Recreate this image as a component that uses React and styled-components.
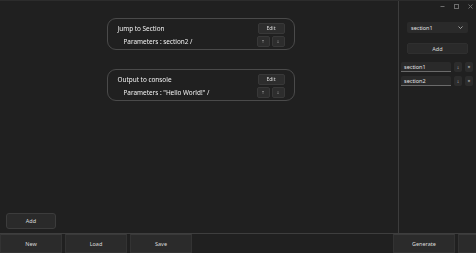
import React from "react";
import styled, { createGlobalStyle } from "styled-components";

const Global = createGlobalStyle`
  html, body {
    margin: 0;
    padding: 0;
    background: #202020;
    overflow: hidden;
  }
  body {
    font-family: "Noto Sans", "Open Sans", sans-serif;
    color: #e6e6e6;
    -webkit-font-smoothing: antialiased;
  }
`;

const Window = styled.div`
  position: relative;
  width: 476px;
  height: 253px;
  overflow: hidden;
  display: grid;
  grid-template-rows: 1fr 19px;
  grid-template-columns: 476px;
  background: #202020;
  border-top: 1px solid #2c2c2c;
  box-sizing: border-box;
`;

const Body = styled.div`
  display: grid;
  grid-template-columns: 398px 1px 77px;
  min-height: 0;
  border-bottom: 1px solid #3e3e3e;
`;

const Main = styled.div`
  display: flex;
  flex-direction: column;
  align-items: center;
  padding-top: 17px;
  padding-left: 3px;
  gap: 19px;
  position: relative;
`;

const Divider = styled.div`
  background: #3c3c3c;
`;

const Card = styled.div`
  width: 188px;
  height: 32px;
  box-sizing: border-box;
  border: 1px solid #4a4a4a;
  border-radius: 9px;
  padding: 4px 9px 0 10px;
  display: flex;
  flex-direction: column;
  gap: 2px;
  filter: grayscale(1);
`;

const CardRow = styled.div`
  display: flex;
  align-items: center;
  justify-content: space-between;
  height: 11px;
`;

const Label = styled.span`
  font-size: 6.4px;
  color: #f2f2f2;
  padding-left: ${(p) => (p.$indent ? "6px" : "0")};
  white-space: nowrap;
`;

const ButtonGroup = styled.div`
  display: flex;
  gap: 2px;
`;

const SmallButton = styled.button`
  width: ${(p) => p.$w || 13}px;
  height: 11px;
  padding: 0;
  margin: 0;
  box-sizing: border-box;
  background: #2d2d2d;
  border: 1px solid #383838;
  border-radius: 2px;
  color: #d8d8d8;
  font-family: inherit;
  font-size: 5px;
  line-height: 9px;
  display: flex;
  align-items: center;
  justify-content: center;
`;

const AddButton = styled.button`
  position: absolute;
  left: 6px;
  bottom: 4px;
  width: 50px;
  height: 16px;
  padding: 0;
  box-sizing: border-box;
  background: #2a2a2a;
  border: 1px solid #3c3c3c;
  border-radius: 3px;
  color: #dcdcdc;
  font-family: inherit;
  font-size: 5.5px;
`;

const Side = styled.div`
  display: flex;
  flex-direction: column;
  padding-top: 21px;
  min-width: 0;
`;

const Select = styled.div`
  margin: 0 8px;
  height: 11px;
  background: #2a2a2a;
  border-radius: 2px;
  display: flex;
  align-items: center;
  justify-content: space-between;
  padding: 0 5px 0 4px;
  font-size: 5.5px;
  color: #e2e2e2;
`;

const WideButton = styled.button`
  margin: 10px 8px 8px;
  height: 11px;
  padding: 0;
  box-sizing: border-box;
  background: #2a2a2a;
  border: 1px solid #2f2f2f;
  border-radius: 2px;
  color: #dcdcdc;
  font-family: inherit;
  font-size: 5.5px;
`;

const SectionRow = styled.div`
  display: flex;
  align-items: center;
  gap: 3px;
  padding-left: 2px;
  margin-bottom: 4px;
`;

const Field = styled.div`
  width: 50px;
  height: 10px;
  box-sizing: border-box;
  background: #2a2a2a;
  border-bottom: 1px solid #6a6a6a;
  border-radius: 2px 2px 0 0;
  font-size: 5.5px;
  color: #e2e2e2;
  padding-left: 3px;
  display: flex;
  align-items: center;
`;

const TinyButton = styled.div`
  width: 8px;
  height: 10px;
  background: #2c2c2c;
  border-radius: 2px;
  color: #cfcfcf;
  font-size: 5px;
  display: flex;
  align-items: center;
  justify-content: center;
`;

const BottomBar = styled.div`
  display: flex;
  gap: 3px;
  width: 520px;
`;

const BarButton = styled.button`
  width: 62px;
  height: 19px;
  padding: 0;
  box-sizing: border-box;
  background: #2b2b2b;
  border: 1px solid #333;
  border-top-color: #3a3a3a;
  color: #dadada;
  font-family: inherit;
  font-size: 5.5px;
  flex-shrink: 0;
  margin-left: ${(p) => (p.$push ? "auto" : "0")};
`;

const Controls = styled.div`
  position: absolute;
  top: 2px;
  right: 3px;
  display: flex;
  gap: 9px;
  align-items: center;
  height: 7px;
`;

function Chevron() {
  return (
    <svg width="5" height="3" viewBox="0 0 5 3">
      <path d="M0.5 0.5 L2.5 2.5 L4.5 0.5" stroke="#bdbdbd" strokeWidth="0.8" fill="none" />
    </svg>
  );
}

function WindowControls() {
  return (
    <Controls>
      <svg width="5" height="5" viewBox="0 0 5 5">
        <path d="M0.5 2.5 H4.5" stroke="#6d6d6d" strokeWidth="1" />
      </svg>
      <svg width="5" height="5" viewBox="0 0 5 5">
        <rect x="0.5" y="0.5" width="4" height="4" stroke="#6d6d6d" strokeWidth="1" fill="none" />
      </svg>
      <svg width="5" height="5" viewBox="0 0 5 5">
        <path d="M0.5 0.5 L4.5 4.5 M4.5 0.5 L0.5 4.5" stroke="#6d6d6d" strokeWidth="1" />
      </svg>
    </Controls>
  );
}

const commands = [
  { name: "Jump to Section", params: "section2 /" },
  { name: "Output to console", params: "\"Hello World!\" /" },
];

const sections = ["section1", "section2"];

export default function App() {
  return (
    <>
      <Global />
      <Window>
        <Body>
          <Main>
            {commands.map((c) => (
              <Card key={c.name}>
                <CardRow>
                  <Label>{c.name}</Label>
                  <SmallButton $w={27}>Edit</SmallButton>
                </CardRow>
                <CardRow>
                  <Label $indent>Parameters : {c.params}</Label>
                  <ButtonGroup>
                    <SmallButton>↑</SmallButton>
                    <SmallButton>↓</SmallButton>
                  </ButtonGroup>
                </CardRow>
              </Card>
            ))}
            <AddButton>Add</AddButton>
          </Main>
          <Divider />
          <Side>
            <Select>
              <span>section1</span>
              <Chevron />
            </Select>
            <WideButton>Add</WideButton>
            {sections.map((s) => (
              <SectionRow key={s}>
                <Field>{s}</Field>
                <TinyButton>↓</TinyButton>
                <TinyButton>×</TinyButton>
              </SectionRow>
            ))}
          </Side>
        </Body>
        <BottomBar>
          <BarButton>New</BarButton>
          <BarButton>Load</BarButton>
          <BarButton>Save</BarButton>
          <BarButton $push>Generate</BarButton>
          <BarButton>Settings</BarButton>
        </BottomBar>
        <WindowControls />
      </Window>
    </>
  );
}
